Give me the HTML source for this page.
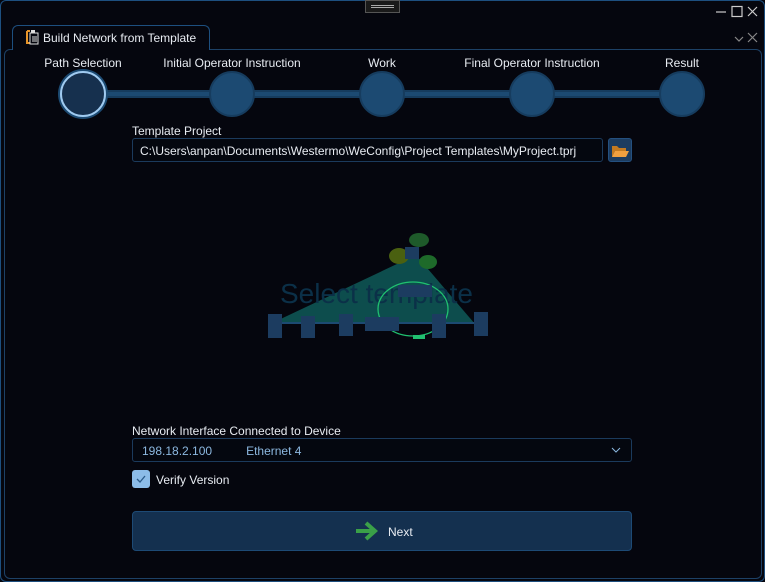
<!DOCTYPE html>
<html><head><meta charset="utf-8"><style>
*{box-sizing:border-box;margin:0;padding:0}
body{width:765px;height:582px;background:#05060e;font-family:"Liberation Sans",sans-serif;font-size:12px;color:#e8ecf2;position:relative;overflow:hidden}
.abs{position:absolute}
.win{left:0;top:0;width:765px;height:582px;border:1px solid #1d4f7f;border-radius:6px}
.panel{left:4px;top:49px;width:758px;height:530px;border:1px solid #1d4166;border-radius:6px}
.tab{left:12px;top:25px;width:198px;height:25px;border:1px solid #1d4f7f;border-bottom:none;border-radius:6px 6px 0 0;background:#05060e}
.step{top:56px;font-size:12px;color:#e8ecf2;transform:translateX(-50%);white-space:nowrap}
.circ{width:46px;height:46px;border-radius:50%;background:#1c4a72;border:2px solid #163c5e;top:71px;transform:translateX(-50%)}
.line{left:90px;top:90px;width:590px;height:8px;background:#1c4a72;border-top:2px solid #163c5e;border-bottom:2px solid #163c5e}
.box{border:1px solid #1b3a5c;border-radius:3px;background:#04070f}
</style></head><body>
<div class="abs win"></div>
<div class="abs" style="left:365px;top:0;width:35px;height:13px;border:1px solid #555;background:#1a1a1a"><div style="margin:4px 5px 0;border-top:1px solid #aaa;border-bottom:1px solid #aaa;height:3px"></div></div>
<svg class="abs" style="left:712px;top:4px" width="50" height="42" stroke="#ccc" fill="none" stroke-width="1.2">
<path d="M4 8h10"/><rect x="20" y="2.5" width="10" height="10"/><path d="M36 3l9 9M45 3l-9 9"/>
<path d="M23 33l4 4 4-4" stroke="#888"/><path d="M36 29l9 9M45 29l-9 9" stroke="#888"/>
</svg>
<div class="abs panel"></div>
<div class="abs tab"></div>
<svg class="abs" style="left:25px;top:29px" width="14" height="16"><path d="M2 2h3M2 2v12h3" stroke="#e8952a" stroke-width="2" fill="none"/><rect x="5" y="4" width="8" height="11" fill="none" stroke="#ddd" stroke-width="1"/><rect x="6" y="1" width="4" height="3" fill="#ddd"/><path d="M7 8h5M7 10h5M7 12h5" stroke="#ddd"/></svg>
<div class="abs" style="left:43px;top:31px;font-size:12px">Build Network from Template</div>
<div class="abs line"></div>
<div class="abs step" style="left:83px">Path Selection</div>
<div class="abs step" style="left:232px">Initial Operator Instruction</div>
<div class="abs step" style="left:382px">Work</div>
<div class="abs step" style="left:532px">Final Operator Instruction</div>
<div class="abs step" style="left:682px">Result</div>
<div class="abs circ" style="left:83px;border:2px solid #9fcaf0;background:#16304e;box-shadow:0 0 0 2px #1c4a72"></div>
<div class="abs circ" style="left:232px"></div>
<div class="abs circ" style="left:382px"></div>
<div class="abs circ" style="left:532px"></div>
<div class="abs circ" style="left:682px"></div>
<div class="abs" style="left:132px;top:124px">Template Project</div>
<div class="abs box" style="left:132px;top:138px;width:471px;height:24px;padding:5px 7px;white-space:nowrap;overflow:hidden">C:\Users\anpan\Documents\Westermo\WeConfig\Project Templates\MyProject.tprj</div>
<div class="abs" style="left:608px;top:138px;width:24px;height:24px;background:#1c3c60;border:1px solid #245080;border-radius:3px"><svg width="22" height="22"><path d="M3 7h5l2 2h7v3H6l-3 6z" fill="#c47a20"/><path d="M6 12h14l-3 6H3z" fill="#f0a040"/></svg></div>
<svg class="abs" style="left:260px;top:220px" width="250" height="130">
<polygon points="10,104 156,35 215,104" fill="#0f5a58" opacity="0.85"/>
<ellipse cx="159" cy="20" rx="10" ry="7" fill="#1e5a2a"/><ellipse cx="139" cy="36" rx="10" ry="8" fill="#4a6010"/><ellipse cx="168" cy="42" rx="9" ry="7" fill="#1e6a2a"/>
<text x="20" y="83" font-size="28" fill="#0b3048" font-family="Liberation Sans">Select template</text>
<ellipse cx="153" cy="89" rx="35" ry="27" fill="none" stroke="#20c070" stroke-width="1.3"/>
<path d="M12 103H228" stroke="#1c4a72" stroke-width="2"/>
<rect x="145" y="27" width="14" height="12" fill="#1c3c60"/><rect x="138" y="65" width="34" height="12" fill="#1c3c60"/><rect x="105" y="97" width="34" height="14" fill="#1c3c60"/>
<rect x="8" y="94" width="14" height="24" fill="#1c3c60"/><rect x="41" y="96" width="14" height="22" fill="#1c3c60"/><rect x="79" y="94" width="14" height="22" fill="#1c3c60"/><rect x="172" y="94" width="14" height="24" fill="#1c3c60"/><rect x="214" y="92" width="14" height="24" fill="#1c3c60"/>
<rect x="153" y="115" width="12" height="4" fill="#20c070"/>
</svg>
<div class="abs" style="left:132px;top:424px">Network Interface Connected to Device</div>
<div class="abs box" style="left:132px;top:438px;width:500px;height:24px;padding:5px 9px;color:#8cb8e0">198.18.2.100<span style="margin-left:34px">Ethernet 4</span><svg class="abs" style="right:10px;top:8px" width="10" height="6"><path d="M1 1l4 4 4-4" stroke="#8cb8e0" fill="none"/></svg></div>
<div class="abs" style="left:132px;top:470px;width:18px;height:18px;background:#8cbce8;border-radius:3px"><svg width="18" height="18"><path d="M5 9l3 3 5-6" stroke="#2a5a88" fill="none" stroke-width="1.3"/></svg></div>
<div class="abs" style="left:156px;top:473px">Verify Version</div>
<div class="abs" style="left:132px;top:511px;width:500px;height:40px;background:#14304f;border:1px solid #1d4a75;border-radius:4px"></div>
<svg class="abs" style="left:354px;top:520px" width="26" height="22"><path d="M2 11h18M12 3l9 8-9 8" stroke="#3aa048" stroke-width="4" fill="none"/></svg>
<div class="abs" style="left:388px;top:525px;font-size:12px">Next</div>
</body></html>
